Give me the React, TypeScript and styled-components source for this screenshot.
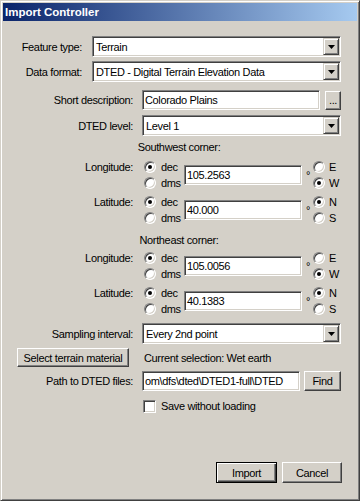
import {FC, ReactNode} from 'react';
import styled, {createGlobalStyle, css} from 'styled-components';

const GlobalStyle = createGlobalStyle`
    html, body {
        margin: 0;
        padding: 0;
        background: #d4d0c8;
    }
    body {
        font-family: "Liberation Sans", Arial, sans-serif;
        font-size: 11px;
        letter-spacing: -0.35px;
        color: #000;
    }
`;

// classic 3d borders
const sunken = css`
    box-sizing: border-box;
    background: #fff;
    border: 1px solid;
    border-color: #808080 #fff #fff #808080;
    box-shadow: inset 1px 1px #404040, inset -1px -1px #d4d0c8;
`;

const raised = css`
    box-sizing: border-box;
    background: #d4d0c8;
    border: 1px solid;
    border-color: #fff #404040 #404040 #fff;
    box-shadow: inset -1px -1px #808080, inset 1px 1px #d4d0c8;
`;

const Window = styled.div`
    width: 360px;
    height: 501px;
    box-sizing: border-box;
    background: #d4d0c8;
    border: 1px solid;
    border-color: #d4d0c8 #404040 #404040 #d4d0c8;
    box-shadow: inset 1px 1px #fff, inset -1px -1px #808080;
    padding: 2px;
    display: flex;
    flex-direction: column;
`;

const TitleBar = styled.div`
    height: 18px;
    flex-shrink: 0;
    background: linear-gradient(to right, #0a246a, #a6caf0);
    color: #fff;
    font-weight: bold;
    font-size: 11.5px;
    letter-spacing: 0;
    line-height: 18px;
    padding-left: 2px;
`;

const Body = styled.div`
    flex: 1;
    display: flex;
    flex-direction: column;
    padding: 15px 16px 15px 14px;
`;

const Row = styled.div<{$labelWidth: number; $mt: number; $h?: number}>`
    display: grid;
    grid-template-columns: ${p => p.$labelWidth}px 1fr;
    align-items: center;
    margin-top: ${p => p.$mt}px;
    height: ${p => p.$h ?? 21}px;
`;

const Label = styled.label<{$pad: number}>`
    text-align: right;
    padding-right: ${p => p.$pad}px;
    white-space: nowrap;
`;

const Controls = styled.div<{$gap: number}>`
    display: flex;
    align-items: center;
    gap: ${p => p.$gap}px;
    height: 100%;
`;

// combo box
const Combo = styled.div`
    ${sunken}
    height: 21px;
    width: 100%;
    padding: 1px;
    display: flex;
    align-items: stretch;
`;

const ComboText = styled.span`
    flex: 1;
    padding-left: 2px;
    display: flex;
    align-items: center;
    white-space: nowrap;
    overflow: hidden;
`;

const DropButton = styled.span`
    width: 16px;
    box-sizing: border-box;
    background: #d4d0c8;
    border: 1px solid;
    border-color: #d4d0c8 #404040 #404040 #d4d0c8;
    box-shadow: inset 1px 1px #fff, inset -1px -1px #808080;
    display: flex;
    align-items: center;
    justify-content: center;
    svg {
        display: block;
    }
`;

const TextBox = styled.div<{$h?: number}>`
    ${sunken}
    flex: 1;
    height: ${p => p.$h ?? 20}px;
    padding: 0 2px;
    display: flex;
    align-items: center;
    white-space: nowrap;
    overflow: hidden;
`;

const Button = styled.button<{$w: number; $h?: number; $default?: boolean}>`
    ${raised}
    font: inherit;
    letter-spacing: inherit;
    color: #000;
    width: ${p => p.$w}px;
    height: ${p => p.$h ?? 20}px;
    padding: 0;
    flex-shrink: 0;
    display: flex;
    align-items: center;
    justify-content: center;
    ${p => p.$default && css`
        border-color: #000;
        box-shadow: inset 1px 1px #fff, inset -1px -1px #404040, inset -2px -2px #808080;
    `}
`;

const Ellipsis = styled(Button)`
    align-items: flex-end;
    padding-bottom: 3px;
`;

const Heading = styled.div<{$mt: number}>`
    margin-top: ${p => p.$mt}px;
    height: 16px;
    line-height: 16px;
    text-align: center;
`;

// longitude / latitude rows
const CoordRow = styled.div<{$mt: number}>`
    display: grid;
    grid-template-columns: 127px 40px 118px 11px 1fr;
    align-items: center;
    margin-top: ${p => p.$mt}px;
    height: 32px;
`;

const CoordLabel = styled(Label)`
    align-self: start;
    line-height: 16px;
`;

const RadioStack = styled.div`
    display: flex;
    flex-direction: column;
`;

const RadioItem = styled.div<{$gap: number}>`
    display: flex;
    align-items: center;
    gap: ${p => p.$gap}px;
    height: 16px;
`;

const RadioCircle = styled.span<{$checked?: boolean}>`
    ${sunken}
    width: 12px;
    height: 12px;
    border-radius: 50%;
    flex-shrink: 0;
    display: flex;
    align-items: center;
    justify-content: center;
    &::after {
        content: '';
        display: ${p => (p.$checked ? 'block' : 'none')};
        width: 4px;
        height: 4px;
        border-radius: 50%;
        background: #000;
    }
`;

const Degree = styled.span`
    padding-left: 4px;
    line-height: 11px;
    align-self: center;
`;

const CheckRow = styled.div`
    margin-top: 7px;
    height: 16px;
    padding-left: 126px;
    display: flex;
    align-items: center;
    gap: 5px;
`;

const CheckBox = styled.span`
    ${sunken}
    width: 13px;
    height: 13px;
`;

const Footer = styled.div`
    margin-top: auto;
    display: flex;
    justify-content: flex-end;
    gap: 5px;
    margin-right: -1px;
`;

const Arrow = () => (
    <svg width="7" height="4" viewBox="0 0 7 4">
        <path d="M0 0h7L3.5 4z" fill="#000" />
    </svg>
);

const Select: FC<{value: string}> = ({value}) => (
    <Combo>
        <ComboText>{value}</ComboText>
        <DropButton><Arrow /></DropButton>
    </Combo>
);

const Radio: FC<{label: string; checked?: boolean; gap: number}> = ({label, checked, gap}) => (
    <RadioItem $gap={gap}>
        <RadioCircle $checked={checked} />
        <span>{label}</span>
    </RadioItem>
);

type CoordProps = {label: string; value: string; hemi: [string, string]; pick: 0 | 1; mt: number};

const Coord: FC<CoordProps> = ({label, value, hemi, pick, mt}) => (
    <CoordRow $mt={mt}>
        <CoordLabel $pad={11}>{label}</CoordLabel>
        <RadioStack>
            <Radio label="dec" checked gap={5} />
            <Radio label="dms" gap={5} />
        </RadioStack>
        <TextBox>{value}</TextBox>
        <Degree>°</Degree>
        <RadioStack>
            <Radio label={hemi[0]} checked={pick === 0} gap={4} />
            <Radio label={hemi[1]} checked={pick === 1} gap={4} />
        </RadioStack>
    </CoordRow>
);

const Field: FC<{label: string; wide?: boolean; mt: number; h?: number; children: ReactNode}> = ({label, wide, mt, h, children}) => (
    <Row $labelWidth={wide ? 75 : 125} $mt={mt} $h={h}>
        <Label $pad={wide ? 10 : 9}>{label}</Label>
        {children}
    </Row>
);

const App: FC = () => {
    return (
        <>
            <GlobalStyle />
            <Window>
                <TitleBar>Import Controller</TitleBar>
                <Body>
                    <Field label="Feature type:" wide mt={0}>
                        <Select value="Terrain" />
                    </Field>
                    <Field label="Data format:" wide mt={4}>
                        <Select value="DTED - Digital Terrain Elevation Data" />
                    </Field>
                    <Field label="Short description:" mt={8} h={20}>
                        <Controls $gap={5}>
                            <TextBox>Colorado Plains</TextBox>
                            <Ellipsis $w={16} $h={19}>...</Ellipsis>
                        </Controls>
                    </Field>
                    <Field label="DTED level:" mt={5}>
                        <Select value="Level 1" />
                    </Field>

                    <Heading $mt={3}>Southwest corner:</Heading>
                    <Coord label="Longitude:" value="105.2563" hemi={['E', 'W']} pick={1} mt={4} />
                    <Coord label="Latitude:" value="40.000" hemi={['N', 'S']} pick={0} mt={3} />

                    <Heading $mt={6}>Northeast corner:</Heading>
                    <Coord label="Longitude:" value="105.0056" hemi={['E', 'W']} pick={1} mt={2} />
                    <Coord label="Latitude:" value="40.1383" hemi={['N', 'S']} pick={0} mt={3} />

                    <Field label="Sampling interval:" mt={6}>
                        <Select value="Every 2nd point" />
                    </Field>
                    <Row $labelWidth={127} $mt={4} $h={19}>
                        <Button $w={112} $h={19}>Select terrain material</Button>
                        <span>Current selection: Wet earth</span>
                    </Row>
                    <Field label="Path to DTED files:" mt={4} h={20}>
                        <Controls $gap={4}>
                            <TextBox>om\dfs\dted\DTED1-full\DTED</TextBox>
                            <Button $w={37}>Find</Button>
                        </Controls>
                    </Field>
                    <CheckRow>
                        <CheckBox />
                        <span>Save without loading</span>
                    </CheckRow>

                    <Footer>
                        <Button $w={61} $h={21} $default>Import</Button>
                        <Button $w={60} $h={21}>Cancel</Button>
                    </Footer>
                </Body>
            </Window>
        </>
    );
};

export default App;
